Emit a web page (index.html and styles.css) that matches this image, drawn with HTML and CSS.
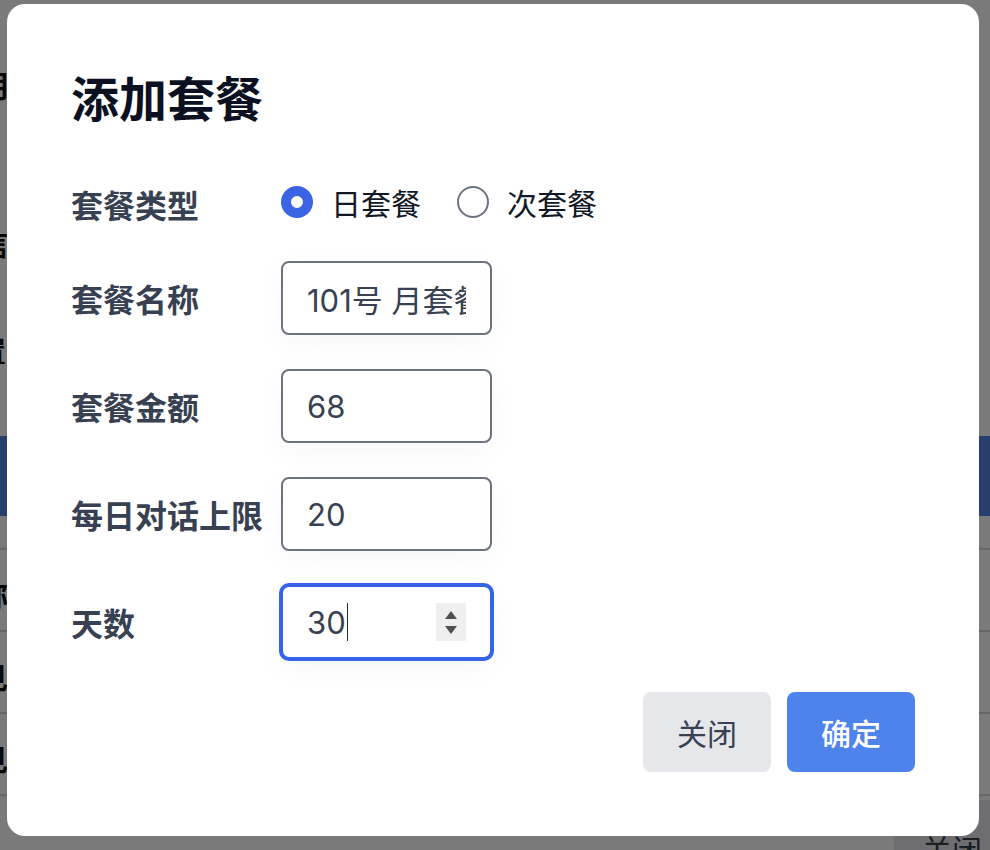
FILE: index.html
```html
<!DOCTYPE html>
<html lang="zh-CN">
<head>
    <meta charset="UTF-8">
    <meta name="viewport" content="width=device-width, initial-scale=1.0">
    <title>添加套餐</title>
    <link rel="stylesheet" href="styles.css">
</head>
<body>
    <!-- page behind the dialog -->
    <div class="page">
        <div class="page-head">期</div>
        <div class="page-sub">信</div>
        <div class="page-sub small">置</div>
        <div class="page-bar"></div>
        <div class="page-row">称</div>
        <div class="page-row">见</div>
        <div class="page-row">见</div>
        <div class="page-foot">
            <span class="page-btn">关闭</span>
        </div>
    </div>

    <div class="overlay">
        <div class="modal">
            <h2 class="modal-title">添加套餐</h2>

            <div class="form">
                <span class="label">套餐类型</span>
                <div class="radios">
                    <label class="radio">
                        <span class="radio-dot checked"></span>
                        <span>日套餐</span>
                    </label>
                    <label class="radio">
                        <span class="radio-dot"></span>
                        <span>次套餐</span>
                    </label>
                </div>

                <span class="label">套餐名称</span>
                <input class="field" type="text" value="101号 月套餐">

                <span class="label">套餐金额</span>
                <input class="field" type="text" value="68">

                <span class="label">每日对话上限</span>
                <input class="field" type="text" value="20">

                <span class="label">天数</span>
                <div class="field field-focus">
                    <span>30</span><span class="caret"></span>
                    <span class="spinner">
                        <span class="tri-up"></span>
                        <span class="tri-down"></span>
                    </span>
                </div>
            </div>

            <div class="actions">
                <button class="btn btn-gray">关闭</button>
                <button class="btn btn-primary">确定</button>
            </div>
        </div>
    </div>
</body>
</html>
```

FILE: styles.css
```css
* {
    margin: 0;
    padding: 0;
    box-sizing: border-box;
}

body {
    font-family: 'Inter', 'Noto Sans CJK SC', sans-serif;
    background: #ffffff;
    color: #111827;
    overflow: hidden;
    height: 850px;
}

/* background page */
.page {
    margin-left: -22px;
    font-weight: 700;
    font-size: 30px;
    color: #111111;
}

.page-head {
    padding-top: 62px;
    height: 220px;
}

.page-sub {
    height: 110px;
}

.page-sub.small {
    height: 106px;
    font-size: 28px;
}

.page-bar {
    height: 80px;
    background: #5584e6;
    margin-bottom: 32px;
}

.page-row {
    height: 82px;
    border-top: 2px solid #d6d6d6;
    padding-top: 22px;
}

.page-foot {
    border-top: 2px solid #d6d6d6;
    display: flex;
    justify-content: flex-end;
}

.page-btn {
    margin-top: 4px;
    width: 96px;
    height: 60px;
    padding: 26px 0 0 28px;
    background: #e5e7eb;
    font-weight: 400;
    color: #374151;
}

/* dialog */
.overlay {
    position: fixed;
    inset: 0;
    background: rgba(0, 0, 0, 0.52);
    padding: 4px 0 0 7px;
}

.modal {
    width: 972px;
    background: #ffffff;
    border-radius: 18px;
    padding: 64px;
}

.modal-title {
    font-size: 48px;
    font-weight: 700;
    line-height: 64px;
    color: #0b1120;
    margin-bottom: 49px;
}

.form {
    display: grid;
    grid-template-columns: 210px 211px;
    grid-template-rows: 46px repeat(4, 74px);
    row-gap: 34px;
    align-items: center;
}

.label {
    font-size: 32px;
    font-weight: 700;
    color: #374151;
    white-space: nowrap;
}

.radios {
    display: flex;
    gap: 36px;
    white-space: nowrap;
    margin-top: -4px;
}

.radio {
    display: flex;
    align-items: center;
    gap: 18px;
    font-size: 30px;
    color: #111827;
}

.radio-dot {
    width: 32px;
    height: 32px;
    border-radius: 50%;
    border: 2px solid #6b7280;
    flex-shrink: 0;
}

.radio-dot.checked {
    border: 10.5px solid #3b64e4;
    background: #ffffff;
}

.field {
    width: 211px;
    height: 74px;
    border: 2px solid #6b7280;
    border-radius: 8px;
    padding: 0 24px;
    font-family: inherit;
    font-size: 31px;
    color: #374151;
    background: #ffffff;
    outline: none;
    box-shadow: 0 8px 30px rgba(0, 0, 0, 0.035);
}

.field-focus {
    display: flex;
    align-items: center;
    border-color: #3563e9;
    box-shadow: 0 0 0 2px #3563e9, 0 8px 30px rgba(0, 0, 0, 0.035);
    padding-right: 24px;
}

.caret {
    width: 1.5px;
    height: 38px;
    background: #1f2937;
    margin-left: 1px;
}

.spinner {
    margin-left: auto;
    width: 30px;
    height: 38px;
    background: #efefef;
    display: flex;
    flex-direction: column;
    align-items: center;
    justify-content: center;
    gap: 7px;
}

.tri-up,
.tri-down {
    width: 0;
    height: 0;
    border-left: 6px solid transparent;
    border-right: 6px solid transparent;
}

.tri-up {
    border-bottom: 8px solid #505050;
}

.tri-down {
    border-top: 8px solid #505050;
}

.actions {
    display: flex;
    justify-content: flex-end;
    gap: 16px;
    margin-top: 33px;
}

.btn {
    width: 128px;
    height: 80px;
    border: none;
    border-radius: 8px;
    font-family: inherit;
    font-size: 30px;
    cursor: pointer;
}

.btn-gray {
    background: #e5e7eb;
    color: #374151;
}

.btn-primary {
    background: #4f83ec;
    color: #ffffff;
    font-weight: 500;
}
```
